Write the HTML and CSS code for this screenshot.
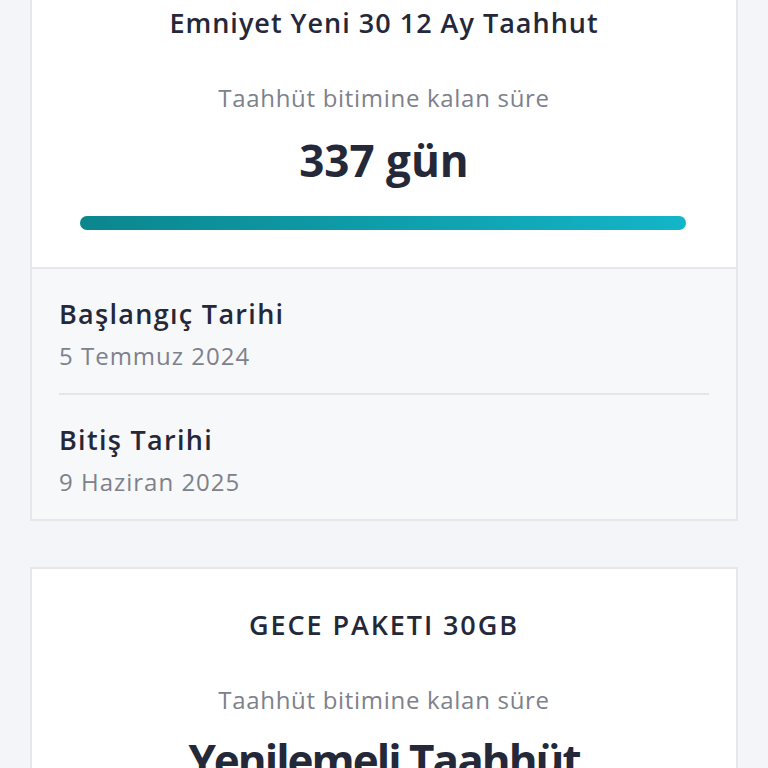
FILE: index.html
```html
<!DOCTYPE html>
<html lang="tr">
<head>
<meta charset="utf-8">
<title>Taahhütlerim</title>
<link rel="stylesheet" href="styles.css">
</head>
<body>
<div class="sayfa">

<div class="kart kart-ilk">
<div class="kart-ust">
<div class="baslik">Emniyet Yeni 30 12 Ay Taahhut</div>
<div class="aciklama">Taahhüt bitimine kalan süre</div>
<div class="kalan">337 gün</div>
<div class="cubuk"><div class="cubuk-dolu" style="width: 99.6%"></div></div>
</div>
<div class="kart-alt">
<div class="satir">
<div class="etiket">Başlangıç Tarihi</div>
<div class="deger">5 Temmuz 2024</div>
</div>
<div class="satir">
<div class="etiket">Bitiş Tarihi</div>
<div class="deger">9 Haziran 2025</div>
</div>
</div>
</div>

<div class="kart">
<div class="kart-ust">
<div class="baslik baslik-buyuk">GECE PAKETI 30GB</div>
<div class="aciklama">Taahhüt bitimine kalan süre</div>
<div class="kalan kalan-yazi">Yenilemeli Taahhüt</div>
</div>
</div>

</div>
</body>
</html>
```

FILE: styles.css
```css
body {
margin: 0;
background-color: #f4f5f8;
font-family: "Open Sans", Lato, sans-serif;
color: #242839;
}
.sayfa {
padding: 0 30px;
height: 768px;
overflow: hidden;
}
.kart {
background-color: #ffffff;
border: 2px solid #e5e7eb;
margin-bottom: 46px;
}
.kart-ilk {
margin-top: -35px;
}
.kart-ust {
padding: 40px 48px 37px;
text-align: center;
}
.baslik {
font-size: 27px;
line-height: 32px;
font-weight: 600;
letter-spacing: 1px;
}
.baslik-buyuk {
letter-spacing: 1.9px;
}
.aciklama {
margin-top: 44px;
font-size: 24px;
line-height: 30px;
color: #7d818b;
letter-spacing: 0.7px;
}
.kalan {
margin-top: 21px;
font-size: 44px;
line-height: 52px;
font-weight: 700;
}
.kalan-yazi {
margin-top: 19px;
letter-spacing: -2px;
}
.cubuk {
margin-top: 30px;
height: 14px;
border-radius: 7px;
background-color: #eef5f7;
}
.cubuk-dolu {
height: 100%;
border-radius: 7px;
background: linear-gradient(to right, #0b868d, #13b5c8);
}
.kart-alt {
border-top: 2px solid #e5e7eb;
background-color: #f7f8fa;
padding: 0 27px;
}
.satir {
padding: 29px 0 22px;
}
.satir + .satir {
border-top: 2px solid #e4e6ea;
padding-top: 29px;
}
.etiket {
font-size: 27px;
line-height: 32px;
font-weight: 600;
letter-spacing: 1.3px;
}
.deger {
margin-top: 11px;
font-size: 24px;
line-height: 30px;
color: #7d818b;
letter-spacing: 1px;
}
```
